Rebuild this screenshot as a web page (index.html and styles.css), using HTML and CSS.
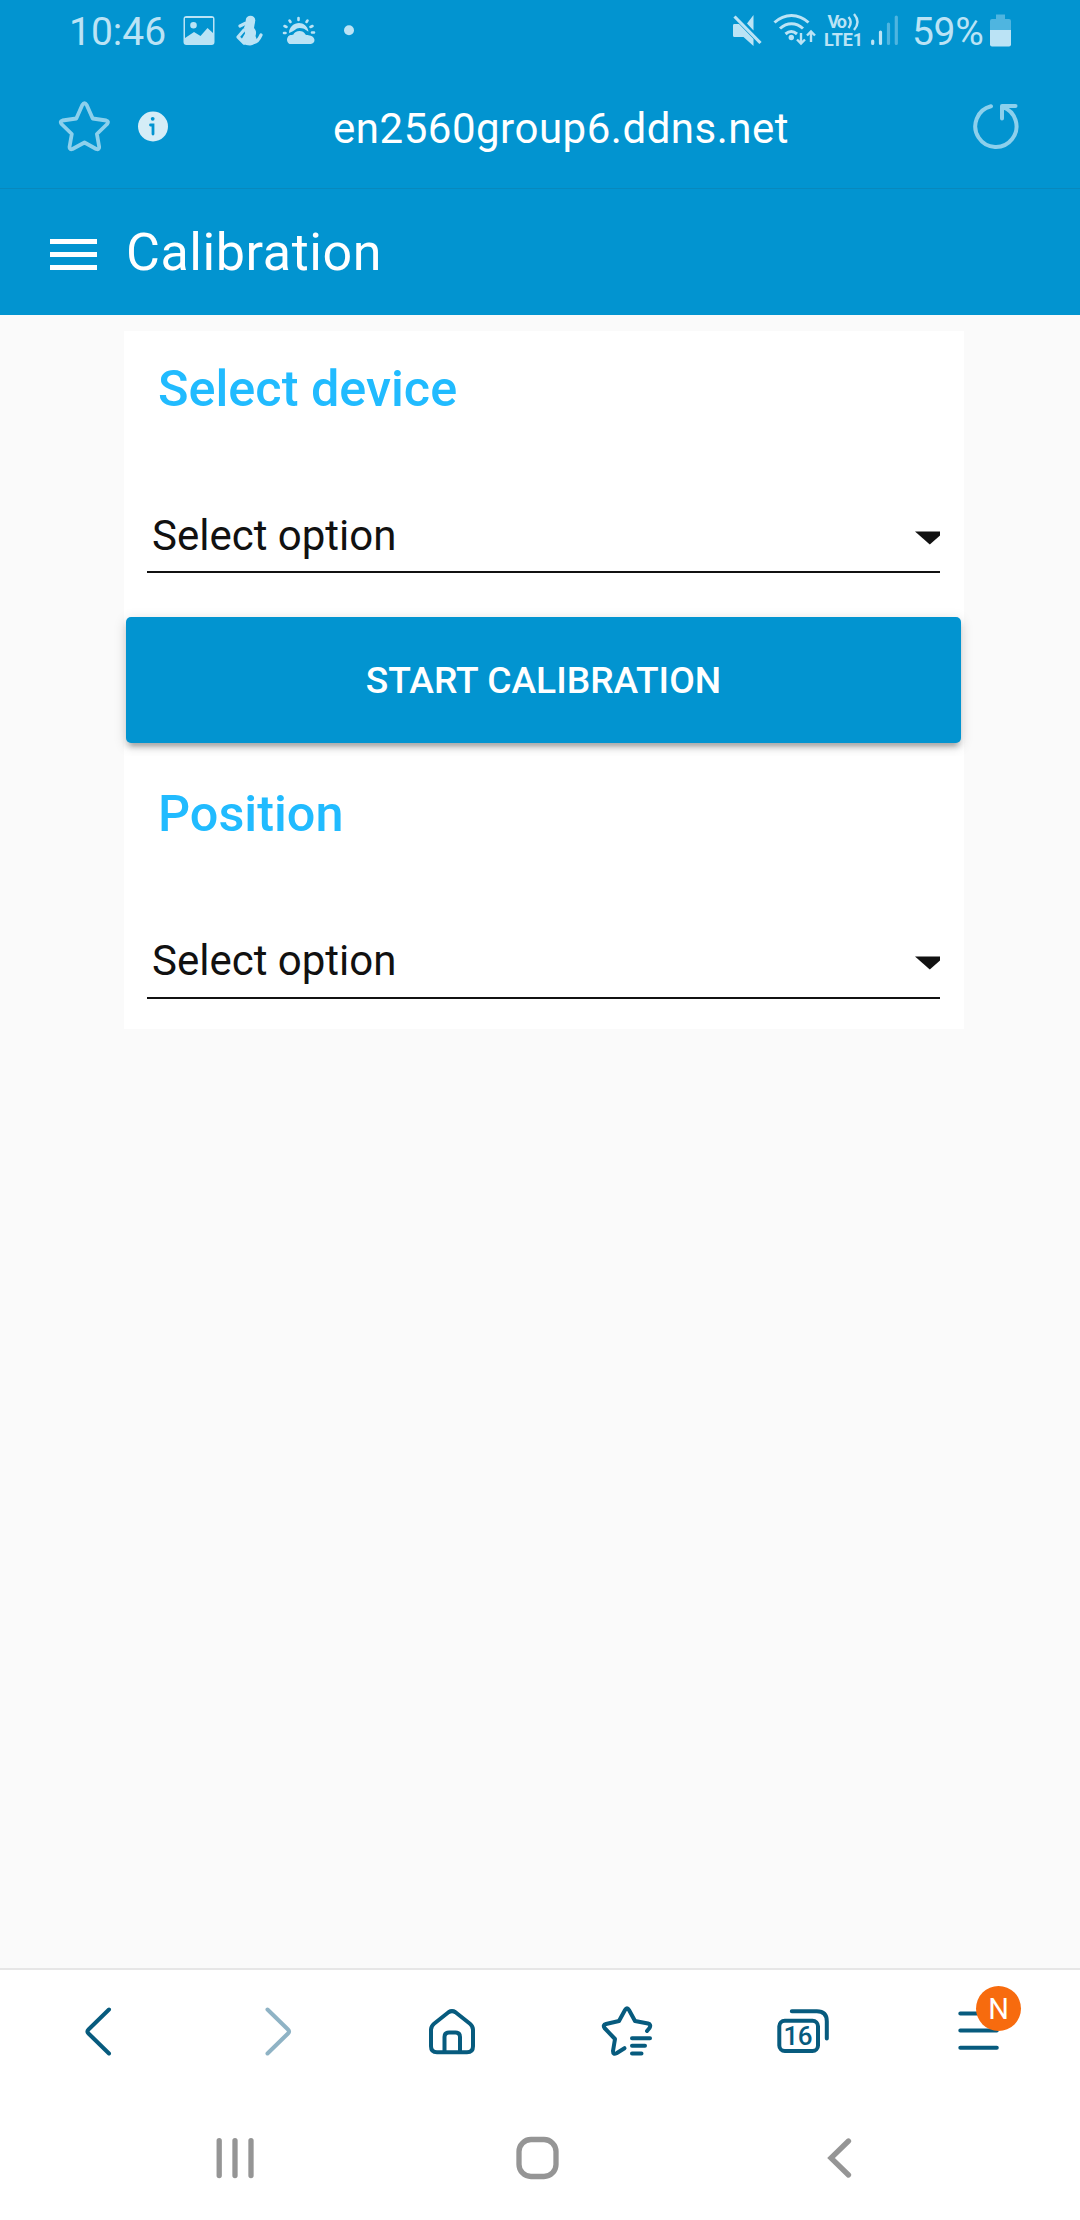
FILE: index.html
```html
<!DOCTYPE html>
<html lang="en">
<head>
<meta charset="utf-8">
<title>Calibration</title>
<link rel="stylesheet" href="styles.css">
</head>
<body>
<div class="screen">
  <div class="status-bar">
    <span class="clock">10:46</span>
    <svg width="45" height="64" viewBox="180 0 45 64"><path fill="currentColor" fill-rule="evenodd" d="M186.500 16h25a3 3 0 0 1 3 3v23a3 3 0 0 1-3 3h-25a3 3 0 0 1-3-3V19a3 3 0 0 1 3-3zM185 18v20l9-6 6.500 4 7-8 5.500 5V18zM193.500 22a3.300 3.300 0 1 1 0 6.600 3.300 3.300 0 0 1 0-6.600z"/></svg>
    <svg width="47" height="64" viewBox="225 0 47 64"><g fill="currentColor"><circle cx="250.500" cy="20.500" r="4.800"/><path d="M246.500 22l8.500 0-1 6c3 3 2 6 1.500 8l1.500 4c-1 4-5 5.500-7 5.500-7 0-9.500-3-8-7l3-5-1-6z"/></g><g fill="none" stroke="currentColor" stroke-width="3.200" stroke-linecap="round" stroke-linejoin="round"><path d="M246 23l-6 3M244 30l-6 7 6 6M254 42.500c3-.5 5-3 7-7.500"/></g></svg>
    <svg width="53" height="64" viewBox="272 0 53 64"><path fill="currentColor" d="M289.500 44a5 5 0 0 1-.3-8.500c2-1 3-.5 4-.8 1.500-4.500 10-5.500 12.300-.2.500.8 5 .2 7.500 2.500 3 3 1 7-2.500 7zM289 33c0-6 5-10 10-10 4.500 0 8.500 3 9.500 8.500-2-.2-3-3.500-9-3.500-4 0-5 3.500-10.500 5z"/><path fill="none" stroke="currentColor" stroke-width="2.600" stroke-linecap="round" d="M298.500 18v2M289.500 20.500l1 1.500M307.500 20.500l-1 1.500M284.500 26l2 1M312.500 26l-2 1M284 33h1.500M312 32.500h2"/></svg>
    <svg width="40" height="64" viewBox="325 0 40 64"><circle cx="349" cy="30.200" r="5" fill="currentColor"/></svg>
    <svg class="push" width="43" height="64" viewBox="725 0 43 64"><path fill="currentColor" d="M753.500 15v15.500l-6.500-7zM734 24h5l14.500 15v7l-10-9H734a1.500 1.500 0 0 1-1-1.500v-10a1.500 1.500 0 0 1 1-1.500z"/><path stroke="currentColor" stroke-width="3.200" d="M734.500 16.500l26 26.500"/></svg>
    <svg width="54" height="64" viewBox="768 0 54 64"><g fill="none" stroke="currentColor" stroke-width="3"><path d="M774.500 22.500c10-9.500 24-9.500 34 0M780 28.500c7-6.500 16-6.500 23 0M785.500 34c4-3.500 7.500-3.500 11.500 0"/><path stroke-width="2.400" d="M801 33v10M797 39.500l4 4 4-4M811 42V32M807 35.500l4-4 4 4"/></g><circle cx="791.300" cy="37.500" r="2.700" fill="currentColor"/></svg>
    <svg class="volte" width="44" height="64" viewBox="822 0 44 64"><text x="827.500" y="27.500" font-size="18" textLength="19.500">Vo</text><text x="824" y="45.500" font-size="18" textLength="39">LTE1</text><path fill="none" stroke="currentColor" stroke-width="2.400" d="M848.500 17q4.500 5 0 11M854 14q7 8 0 16"/></svg>
    <svg width="39" height="64" viewBox="866 0 39 64"><g fill="none" stroke="currentColor" stroke-width="3.200" stroke-linecap="round"><path d="M872.700 41v2.500M880.500 32v11.500"/><path opacity=".42" d="M888.500 24v19.500M896.300 17v26.500"/></g></svg>
    <span class="charge">59%</span>
    <svg width="35" height="64" viewBox="985 0 35 64"><path fill="currentColor" opacity=".42" d="M996 14.500h9v4.500h4a2 2 0 0 1 2 2v9.500h-21V21a2 2 0 0 1 2-2h4z"/><path fill="currentColor" d="M990 30h21v14.500a2 2 0 0 1-2 2h-17a2 2 0 0 1-2-2z"/></svg>
  </div>

  <div class="url-bar">
    <svg width="80" height="124" viewBox="45 64 80 124"><path fill="none" stroke="#8dd0ec" stroke-width="3.800" stroke-linejoin="round" d="M82.300 105q2.200-3.500 4.400 0l6 13.500 13.500 2q3 1 1 3.500l-10.300 10 2.300 13q0 3-3 2L84.500 142.500l-12 6.500q-3 1-3-2l2.300-13-10.300-10q-2-2.500 1-3.500l13.800-2z"/></svg>
    <svg width="50" height="124" viewBox="125 64 50 124"><circle cx="153" cy="126.500" r="15" fill="#d5edf7"/><path fill="none" stroke="#0294d0" stroke-width="2.800" stroke-linecap="round" d="M150.500 125h2.500v9"/><circle cx="152.700" cy="118.800" r="1.900" fill="#0294d0"/></svg>
    <span class="address">en2560group6.ddns.net</span>
    <svg width="80" height="124" viewBox="955 64 80 124"><path fill="none" stroke="#8dd0ec" stroke-width="4" stroke-linecap="round" stroke-linejoin="round" d="M991 106.300a20.600 20.600 0 1 0 11.500.5M1002 118.500v-12.500h13.500"/></svg>
  </div>

  <header class="app-bar">
    <button class="menu" aria-label="Menu"><i></i><i></i><i></i></button>
    <h1>Calibration</h1>
  </header>

  <main class="content">
    <section class="card">
      <h2>Select device</h2>
      <div class="select"><span>Select option</span><svg width="25" height="14" viewBox="0 0 25 14"><path fill="#111" d="M0 .5h29.500L14.800 13.500z"/></svg></div>
      <button class="start">START CALIBRATION</button>
    </section>
    <section class="card last">
      <h2>Position</h2>
      <div class="select"><span>Select option</span><svg width="25" height="14" viewBox="0 0 25 14"><path fill="#111" d="M0 .5h29.500L14.800 13.500z"/></svg></div>
    </section>
  </main>

  <nav class="toolbar">
    <svg width="60" height="130" viewBox="70 1970 60 130"><path d="M109 2009.500l-20.500 20q-2 2 0 4l20.500 20"/></svg>
    <svg class="disabled" width="60" height="130" viewBox="246 1970 60 130"><path d="M267.500 2009.500l20.500 20q2 2 0 4l-20.500 20"/></svg>
    <svg width="60" height="130" viewBox="422 1970 60 130"><path d="M448.500 2012.200q3.500-2.200 7 0l14.500 11.500q3 2.500 3 6v16.500q0 6-6 6h-30q-6 0-6-6v-16.500q0-3.500 3-6zM444.500 2052v-15q0-4.500 4.500-4.500h6.500q4.500 0 4.500 4.500v15"/></svg>
    <svg width="60" height="130" viewBox="598 1970 60 130"><path d="M647 2031l2.500-3q2-3.500-1.500-4.500l-13-2.500-6-11q-2-3.500-4 0l-6 11-13 3q-3.500 1-1.500 4l10.500 11-2 12q0 4 3.500 2.200l8-5M632 2038.200h18M632 2045.700h13M632 2053.500h9.500"/></svg>
    <svg class="tabs" width="60" height="130" viewBox="774 1970 60 130"><path d="M791.800 2011.300h25q10 0 10 10v17.200"/><rect x="779.300" y="2020.800" width="38.700" height="30.200" rx="5.500"/><text x="783.500" y="2045.300" font-size="26" textLength="29">16</text></svg>
    <div class="more">
      <svg width="60" height="130" viewBox="950 1970 60 130"><path d="M960.300 2013.400h36.500M960.300 2030.600h36.500M960.300 2047.700h36.500"/></svg>
      <span class="badge">N</span>
    </div>
  </nav>

  <nav class="system-nav">
    <svg width="60" height="120" viewBox="205 2100 60 120"><path d="M219.200 2140.600v35M235 2140.600v35M251 2140.600v35"/></svg>
    <svg width="60" height="120" viewBox="507.500 2100 60 120"><rect x="518.500" y="2139.500" width="37" height="37" rx="12"/></svg>
    <svg width="60" height="120" viewBox="810 2100 60 120"><path d="M848.500 2141l-17.500 17 17.500 17"/></svg>
  </nav>
</div>
</body>
</html>
```
FILE: styles.css
```css
* { box-sizing: border-box; margin: 0; padding: 0; }
body { font-family: Roboto, sans-serif; background: #fafafa; }
svg { display: block; flex: none; }
button { border: 0; font-family: inherit; }

.screen { width: 1080px; height: 2220px; display: flex; flex-direction: column; overflow: hidden; }

.status-bar {
  height: 64px; padding: 0 60px 0 69px; flex: none;
  display: flex; background: #0294d0; color: #bbe3f5;
}
.clock, .charge { font-size: 39px; line-height: 65px; white-space: nowrap; }
.clock { width: 111px; }
.charge { width: 80px; padding-left: 7px; letter-spacing: -.3px; }
.push { margin-left: auto; }
.volte { fill: currentColor; font-weight: 700; }

.url-bar {
  height: 125px; padding: 0 45px; flex: none;
  display: flex; background: #0294d0; border-bottom: 1px solid #0888bd;
}
.address { flex: 1; padding-left: 158px; color: #fff; font-size: 42px; line-height: 129px; letter-spacing: .52px; }

.app-bar {
  height: 126px; padding-left: 50px; flex: none;
  display: flex; align-items: center; background: #0294d0; color: #fff;
}
.menu { width: 47px; display: flex; flex-direction: column; gap: 8px; background: none; padding-top: 5px; }
.menu i { height: 5px; background: #fff; }
.app-bar h1 { margin-left: 29px; font-size: 52px; font-weight: 400; line-height: 126px; letter-spacing: .6px; padding-top: 1px; }

.content { flex: 1; padding: 16px 116px 0 124px; }
.card { position: relative; height: 425px; padding: 20px 24px 0 23px; background: #fff; }
.card.last { height: 273px; }
.card h2 { padding-left: 11px; font-size: 50.400px; font-weight: 500; line-height: 76px; color: #21bbff; }
.select {
  height: 91px; margin-top: 55px; padding: 17px 0 0 5px;
  display: flex; justify-content: space-between; align-items: center;
  border-bottom: 2px solid #111; color: #111; font-size: 42px;
}
.select svg { margin-top: 6px; }
.last .select { height: 92px; padding-top: 16px; }
.start {
  display: block; width: 835px; height: 126px; margin: 44px 0 0 -21px;
  border-radius: 5px; background: #0294d0; color: #fff;
  font-size: 37.200px; font-weight: 500; line-height: 126px;
  box-shadow: 0 5px 5px rgba(0,0,0,.14), 0 8px 3px -5px rgba(0,0,0,.12), 0 3px 13px rgba(0,0,0,.16);
}

.toolbar {
  height: 132px; padding: 0 70px; flex: none;
  display: flex; justify-content: space-between;
  background: #fff; border-top: 2px solid #e6e6e6; color: #075b7e;
}
.toolbar svg { fill: none; stroke: currentColor; stroke-width: 4; stroke-linecap: round; stroke-linejoin: round; }
.toolbar .disabled { color: #8fb3c5; }
.toolbar text { fill: currentColor; stroke: none; font-weight: 500; }
.more { position: relative; }
.badge {
  position: absolute; left: 26px; top: 16px; width: 45px; height: 45px;
  border-radius: 50%; background: #f76b0e; color: #fff;
  font-size: 29px; line-height: 46px; text-align: center;
}

.system-nav { height: 120px; padding: 0 210px 0 205px; flex: none; display: flex; justify-content: space-between; background: #fff; }
.system-nav svg { fill: none; stroke: #959595; stroke-width: 5.300; stroke-linecap: round; }
```
